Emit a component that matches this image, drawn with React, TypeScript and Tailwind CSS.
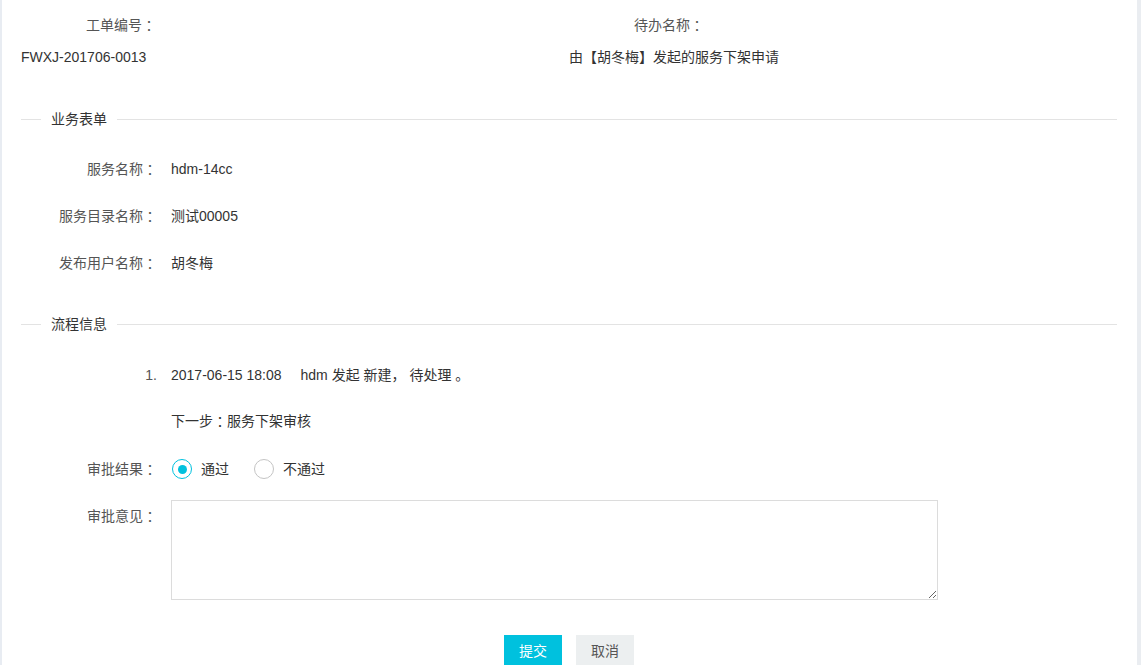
import { useState } from 'react';

const font = { fontFamily: '"Liberation Sans", "Noto Sans CJK SC", sans-serif' };
const colonFont = { fontFamily: '"Noto Sans CJK JP", sans-serif' };

function Colon() {
  return (
    <span className="inline-block align-top h-5 leading-5" style={colonFont}>
      ：
    </span>
  );
}

function SectionTitle({ title }: { title: string }) {
  return (
    <div className="flex items-center">
      <div className="w-[20px] h-px bg-[#e3e3e3]" />
      <span className="px-[10px] leading-5">{title}</span>
      <div className="flex-1 h-px bg-[#e3e3e3]" />
    </div>
  );
}

function Row({ label, colon = true, children, className = '' }: { label: string; colon?: boolean; children?: React.ReactNode; className?: string }) {
  return (
    <div className={`flex leading-5 ${className}`}>
      <div className="w-[136px] h-5 shrink-0 text-right text-[#555]">
        {label}
        {colon && label && <Colon />}
      </div>
      <div className="ml-[14px] min-h-5">{children}</div>
    </div>
  );
}

function Radio({ checked, label, onClick }: { checked: boolean; label: string; onClick: () => void }) {
  return (
    <label className="flex items-center cursor-pointer" onClick={onClick}>
      <span
        className={`w-[20px] h-[20px] rounded-full border flex items-center justify-center bg-white ${
          checked ? 'border-[#00c1de]' : 'border-[#c4c4c4]'
        }`}
      >
        {checked && <span className="w-[9px] h-[9px] rounded-full bg-[#00c1de]" />}
      </span>
      <span className="ml-[9px]">{label}</span>
    </label>
  );
}

export default function App() {
  const [pass, setPass] = useState(true);

  return (
    <div className="h-[665px] overflow-hidden bg-[#eaedf1] flex" style={font}>
      <div className="w-[2px] bg-[#e8ecf2]" />
      <div className="w-[1135px] bg-white pl-[19px] pr-[20px] text-[14px] text-[#333]">
        {/* 头部 */}
        <div className="flex pt-[15px] leading-5">
          <div className="w-[548px]">
            <div className="pl-[65px] h-5 text-[#555]">工单编号<Colon /></div>
            <div className="mt-[12px]">FWXJ-201706-0013</div>
          </div>
          <div>
            <div className="pl-[65px] h-5 text-[#555]">待办名称<Colon /></div>
            <div className="mt-[12px]">由【胡冬梅】发起的服务下架申请</div>
          </div>
        </div>

        <div className="mt-[42px]">
          <SectionTitle title="业务表单" />
        </div>
        <Row label="服务名称" className="mt-[30px]">hdm-14cc</Row>
        <Row label="服务目录名称" className="mt-[27px]">测试00005</Row>
        <Row label="发布用户名称" className="mt-[27px]">胡冬梅</Row>

        <div className="mt-[41px]">
          <SectionTitle title="流程信息" />
        </div>
        <Row label="1." colon={false} className="mt-[31px]">
          <span>2017-06-15 18:08</span>
          <span className="ml-[19px]">hdm 发起 新建， 待处理 。</span>
        </Row>
        <Row label="" className="mt-[26px]">
          <div className="h-5">下一步<Colon />服务下架审核</div>
        </Row>
        <Row label="审批结果" className="mt-[28px]">
          <div className="flex items-center ml-[1px]">
            <Radio checked={pass} label="通过" onClick={() => setPass(true)} />
            <div className="ml-[25px]">
              <Radio checked={!pass} label="不通过" onClick={() => setPass(false)} />
            </div>
          </div>
        </Row>
        <div className="flex mt-[21px]">
          <div className="w-[136px] shrink-0 text-right text-[#555] pt-[6px]">
            <div className="h-5 leading-5">审批意见<Colon /></div>
          </div>
          <textarea className="ml-[14px] w-[767px] h-[100px] border border-[#dcdcdc] outline-none p-2 resize" />
        </div>

        <div className="flex justify-center gap-[14px] mt-[35px]">
          <button className="w-[58px] h-[32px] bg-[#00c1de] text-white">提交</button>
          <button className="w-[58px] h-[32px] bg-[#eceff0] text-[#555]">取消</button>
        </div>
      </div>
    </div>
  );
}
